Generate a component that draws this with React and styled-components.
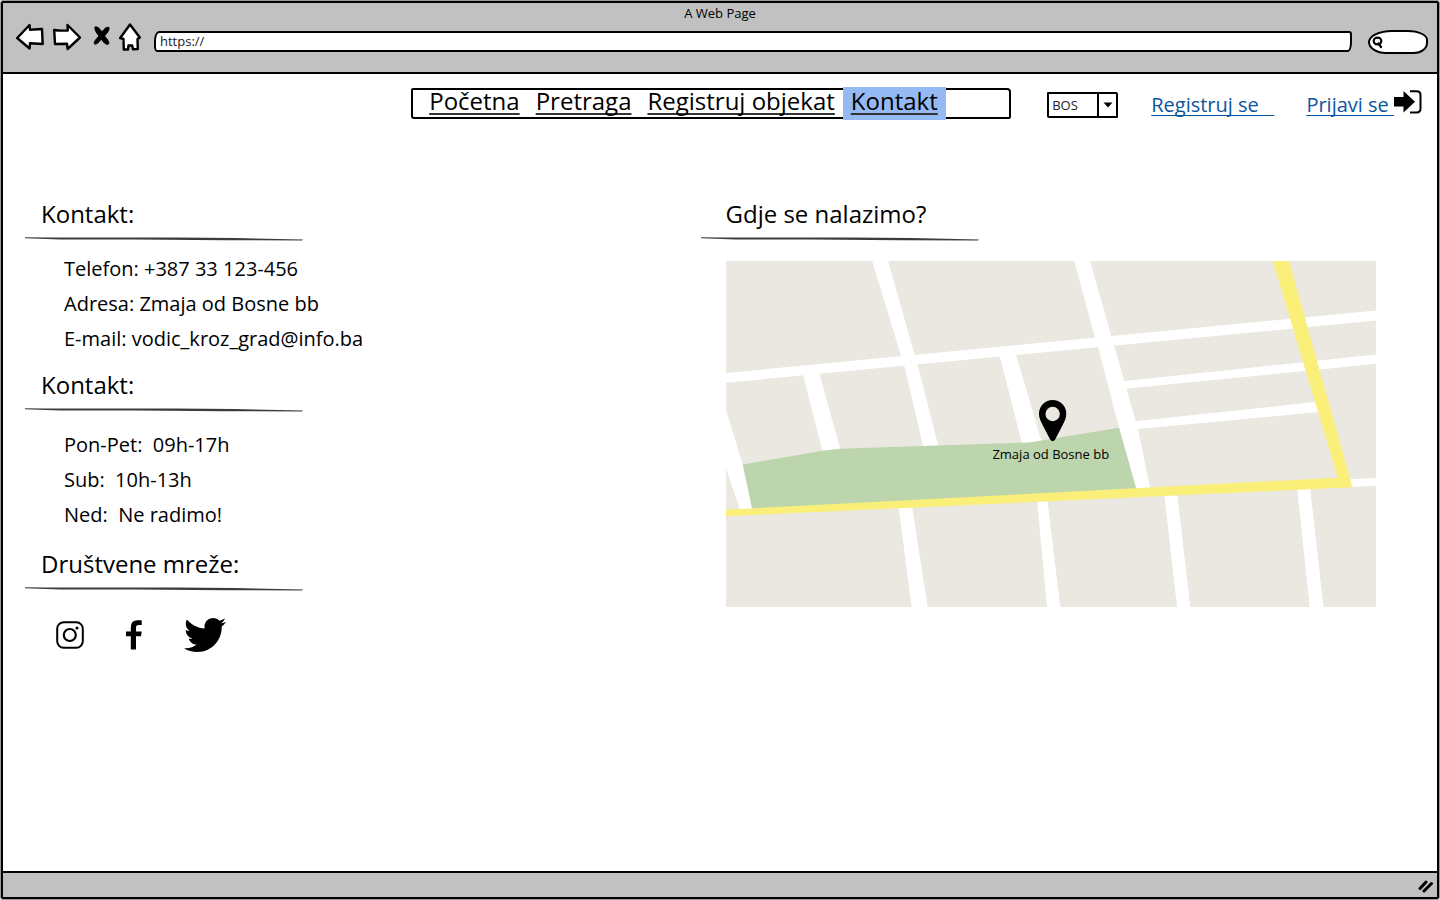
import React from 'react';
import styled, { createGlobalStyle } from 'styled-components';
import { FaTwitter } from 'react-icons/fa';

const INK = '#000';
const CHROME = '#c1c1c1';
const LINK = '#0b559f';

const GlobalStyle = createGlobalStyle`
  *, *::before, *::after { box-sizing: border-box; }
  body {
    margin: 0;
    background: #fff;
    color: ${INK};
    font-family: "Open Sans", "Noto Sans", sans-serif;
    font-size: 20px;
  }
  svg { display: block; }
`;

/* ---------- browser window ---------- */

const Page = styled.div`
  min-height: 100vh;
  padding: 1px;
  display: flex;
`;

const BrowserWindow = styled.div`
  flex: 1;
  display: flex;
  flex-direction: column;
  border: 2px solid ${INK};
  border-radius: 2px;
  box-shadow: 0 0 0 1px #999;
`;

const Chrome = styled.header`
  background: ${CHROME};
  border-bottom: 2px solid ${INK};
  padding-bottom: 12px;
`;

const WindowTitle = styled.div`
  font-size: 13px;
  line-height: 20px;
  text-align: center;
`;

const Toolbar = styled.div`
  display: flex;
  align-items: center;
  height: 37px;
  padding: 0 9px 0 13px;
`;

const ToolButtons = styled.div`
  display: flex;
  gap: 9px;
  padding-bottom: 9px;
  margin-right: 13px;
`;

const ToolButton = styled.button`
  border: 0;
  padding: 0;
  background: none;
  cursor: pointer;
`;

const AddressBar = styled.input`
  flex: 1;
  min-width: 0;
  height: 21px;
  margin-right: 16px;
  padding: 0 4px 2px;
  border: 2px solid ${INK};
  border-radius: 5px 3px 4px 3px / 10px 3px 10px 6px;
  background: #fff;
  color: #222;
  font: 13px/15px "Open Sans", sans-serif;
`;

const SearchField = styled.label`
  display: flex;
  align-items: center;
  width: 60px;
  height: 24px;
  padding-left: 2px;
  border: 2px solid ${INK};
  border-radius: 24px 20px 14px 18px / 12px 10px 11px 12px;
  background: #fff;
`;

const SearchInput = styled.input`
  flex: 1;
  min-width: 0;
  border: 0;
  padding: 0;
  outline: 0;
  background: none;
  font: 12px "Open Sans", sans-serif;
`;

const StatusBar = styled.footer`
  display: flex;
  justify-content: flex-end;
  align-items: center;
  height: 26px;
  padding: 2px 3px 0 0;
  border-top: 2px solid ${INK};
  background: ${CHROME};
`;

/* ---------- site header ---------- */

const SiteHeader = styled.div`
  display: flex;
  justify-content: flex-end;
  align-items: center;
  padding: 14px 15px 0;
`;

const Nav = styled.nav`
  display: flex;
  width: 600px;
  height: 31px;
  padding-left: 8px;
  border: 2px solid ${INK};
  border-radius: 2px 4px 2px 3px;
`;

const NavLink = styled.a`
  margin: -3px 0;
  padding: 4px 8px 8px;
  background: ${({ $active }) => ($active ? '#95b9f2' : 'none')};
  color: ${INK};
  font-size: 24px;
  line-height: 20px;
  white-space: nowrap;
  text-decoration: underline 2px #333;
  text-decoration-skip-ink: none;
  text-underline-offset: 3px;
`;

const LanguageField = styled.div`
  display: grid;
  width: 71px;
  height: 26px;
  margin: 3px 33px 0 36px;
  border: 2px solid ${INK};
  border-radius: 1px 2px 1px 2px;
`;

const LanguageSelect = styled.select`
  grid-area: 1 / 1;
  appearance: none;
  width: 100%;
  border: 0;
  padding: 0 22px 0 3px;
  background: none;
  color: #222;
  font: 13px/20px "Open Sans", sans-serif;
`;

const SelectArrow = styled.span`
  grid-area: 1 / 1;
  justify-self: end;
  display: flex;
  align-items: center;
  justify-content: center;
  width: 19px;
  border-left: 2px solid ${INK};
  pointer-events: none;
`;

const AccountLink = styled.a`
  display: flex;
  align-items: center;
  margin-left: ${({ $gap }) => $gap || 0}px;
  color: ${LINK};
  line-height: 26px;
  white-space: nowrap;
  text-decoration: none;
`;

const LinkText = styled.span`
  padding-top: 2px;
  text-decoration: underline 1px;
  text-decoration-skip-ink: none;
  text-underline-offset: 3px;
`;

const LoginIcon = styled.svg`
  margin-bottom: 4px;
`;

/* ---------- content ---------- */

const Content = styled.main`
  flex: 1;
  display: grid;
  grid-template-columns: 1fr 1fr;
  align-items: start;
  padding: 77px 61px 24px 22px;
`;

const Section = styled.section`
  margin-bottom: ${({ $after }) => $after || 0}px;
`;

const Heading = styled.h2`
  margin: 0;
  padding: 0 0 5px ${({ $indent }) => $indent || 16}px;
  font-size: 24px;
  font-weight: 400;
  line-height: 36px;
`;

const InfoList = styled.ul`
  margin: ${({ $before }) => $before}px 0 0;
  padding: 0 0 0 39px;
  list-style: none;
  line-height: 35px;
  white-space: pre-wrap;
`;

const SocialLinks = styled.div`
  display: flex;
  align-items: center;
  gap: 42px;
  margin-top: 23px;
  padding-left: 31px;
`;

const SocialLink = styled.a`
  color: ${INK};
`;

const MapFigure = styled.figure`
  position: relative;
  margin: 20px 0 0 25px;
`;

const MapPin = styled.figcaption`
  position: absolute;
  left: 50%;
  top: 40%;
  display: flex;
  flex-direction: column;
  align-items: center;
  gap: 3px;
  transform: translateX(-50%);
  font-size: 13px;
  line-height: 18px;
  white-space: nowrap;
`;

const Marker = styled.svg`
  margin-left: 4px;
`;

const SketchIcon = ({ width, height = 28, d, solid }) => (
  <svg width={width} height={height} viewBox={`0 0 ${width} ${height}`} aria-hidden="true">
    <path d={d} fill={solid ? INK : '#fff'} stroke={INK} strokeWidth={solid ? 1 : 2.4} strokeLinejoin="round" />
  </svg>
);

const HeadingRule = () => (
  <svg width="278" height="4" viewBox="0 0 278 4" aria-hidden="true">
    <path d="M0 .2 20 .5 150 .4 210 1 278 2.4 277 3.6 200 3.2 110 2.6 35 2.6 0 1.2Z" fill="#3c3c3c" />
  </svg>
);

const tools = [
  { label: 'Back', width: 28, d: 'M1.200 15 13.500 2 14 6.800 26 6 26.700 21 14 20.200 13.600 25.500Z' },
  { label: 'Forward', width: 28, d: 'M1.200 7Q6 8 14.800 7.500L14.500 2 27 14.500 14.600 26 14 20.800 2 21Z' },
  {
    label: 'Stop',
    width: 20,
    solid: true,
    d: 'M5 4Q8 3 12 9Q16 3 19 4.500Q20 7 14.500 13Q20 19 18.500 21Q15 22.500 11.500 16Q7 22 4.500 21Q3 19 9 13Q4 7 5 4Z',
  },
  {
    label: 'Home',
    width: 22,
    d: 'M11 1.500 20.800 14.500 18.500 16 18.800 26 14 26.200 13.200 22.500 9.500 22.500 9 26.500 4.800 26.500 4.500 16 1.200 15Z',
  },
];

const navItems = ['Početna', 'Pretraga', 'Registruj objekat', 'Kontakt'];
const contactLines = ['Telefon: +387 33 123-456', 'Adresa: Zmaja od Bosne bb', 'E-mail: vodic_kroz_grad@info.ba'];
const hours = ['Pon-Pet:  09h-17h', 'Sub:  10h-13h', 'Ned:  Ne radimo!'];

const roads = [
  '0,112 650,49.500 650,59.500 0,121.700',
  '146,0 162,0 188.500,94 191,102 212.500,186 197.200,186 178.500,106 175,95',
  '77,114 93,112 114.300,188 96.500,190',
  '273.300,94 289.300,92 315.300,180 295.700,182',
  '348,0 363.700,0 384.700,73.700 398,120 411.700,168 424,228 410.300,228 392.700,166.700 371.700,85.300 368.300,75',
  '396,120.200 650,93.300 650,102.700 396,128',
  '406,160.500 588.300,141 605.700,149.700 591.700,151 406,168.400',
  '0,149 16.700,203.300 26.300,248 14,248 0,207.300',
  '620,218.200 650,216.700 650,224.500 620,226',
  '172.500,246 186,246 201.500,346 185.500,346',
  '311,240 321.300,240 334,346 320.700,346',
  '438,234 451,234 464,346 450.700,346',
  '570.700,227 583.700,227 597,346 583.300,346',
];

const CityMap = () => (
  <svg width="100%" viewBox="0 0 650 346" role="img" aria-label="Mapa">
    <rect width="650" height="346" fill="#ebe8e1" />
    {roads.map((points) => (
      <polygon key={points} points={points} fill="#fff" />
    ))}
    <polygon points="16.700,203.300 96.300,189.700 114,187.500 303,181.300 392.700,166.700 410.300,229 26.300,248" fill="#bcd5ac" />
    <polygon points="546.300,0 562.500,0 626,226 0,255 0,248.500 611.300,216.500" fill="#faef78" />
  </svg>
);

export default function App() {
  return (
    <>
      <GlobalStyle />
      <Page>
        <BrowserWindow>
          <Chrome>
            <WindowTitle>A Web Page</WindowTitle>
            <Toolbar>
              <ToolButtons>
                {tools.map(({ label, ...icon }) => (
                  <ToolButton key={label} type="button" aria-label={label}>
                    <SketchIcon {...icon} />
                  </ToolButton>
                ))}
              </ToolButtons>
              <AddressBar aria-label="Address" defaultValue="https://" />
              <SearchField>
                <svg width="12" height="14" viewBox="0 0 12 14" fill="none" stroke={INK} strokeWidth="2.200" strokeLinecap="round" aria-hidden="true">
                  <ellipse cx="5.500" cy="6" rx="3.800" ry="3.300" />
                  <path d="M6.500 8.500 9 12" />
                </svg>
                <SearchInput type="search" aria-label="Search" />
              </SearchField>
            </Toolbar>
          </Chrome>

          <SiteHeader>
            <Nav>
              {navItems.map((item) => (
                <NavLink key={item} href="#" $active={item === 'Kontakt'}>
                  {item}
                </NavLink>
              ))}
            </Nav>
            <LanguageField>
              <LanguageSelect aria-label="Jezik" defaultValue="BOS">
                <option>BOS</option>
              </LanguageSelect>
              <SelectArrow>
                <svg width="10" height="6" viewBox="0 0 10 6" aria-hidden="true">
                  <path d="M.5 .5H9.500L5 5.500Z" fill={INK} />
                </svg>
              </SelectArrow>
            </LanguageField>
            <AccountLink href="#">
              <LinkText>{'Registruj se\u00a0\u00a0\u00a0'}</LinkText>
            </AccountLink>
            <AccountLink href="#" $gap={32}>
              <LinkText>{'Prijavi se\u00a0'}</LinkText>
              <LoginIcon width="28" height="24" viewBox="0 0 28 24" aria-hidden="true">
                <path d="M0 7H9.500V1L21 11.700 9.500 22.500V16.500H0Z" fill={INK} />
                <path d="M16 1.200H22.500Q26.500 1.200 26.500 5V18.500Q26.500 22.500 22.500 22.500H16" fill="none" stroke={INK} strokeWidth="2" />
              </LoginIcon>
            </AccountLink>
          </SiteHeader>

          <Content>
            <div>
              <Section $after={11}>
                <Heading>Kontakt:</Heading>
                <HeadingRule />
                <InfoList $before={10}>
                  {contactLines.map((line) => (
                    <li key={line}>{line}</li>
                  ))}
                </InfoList>
              </Section>
              <Section $after={14}>
                <Heading>Kontakt:</Heading>
                <HeadingRule />
                <InfoList $before={15}>
                  {hours.map((line) => (
                    <li key={line}>{line}</li>
                  ))}
                </InfoList>
              </Section>
              <Section>
                <Heading>Društvene mreže:</Heading>
                <HeadingRule />
                <SocialLinks>
                  <SocialLink href="#" aria-label="Instagram">
                    <svg width="28" height="28" viewBox="0 0 28 28" fill="none" stroke={INK} strokeWidth="2" aria-hidden="true">
                      <rect x="1.200" y="1.200" width="25.600" height="25.600" rx="6.500" />
                      <circle cx="13.800" cy="14" r="6" strokeWidth="2.200" />
                      <circle cx="21" cy="7" r="1.600" fill={INK} stroke="none" />
                    </svg>
                  </SocialLink>
                  <SocialLink href="#" aria-label="Facebook">
                    <svg width="16" height="30" viewBox="0 0 16 30" aria-hidden="true">
                      <path d="M4.800 29.500V16.200H0V11.500H4.800V7.500Q4.800 .3 11.500 .3H15.700V5H12.500Q10 5 10 7.600V11.500H15.700L15 16.200H10V29.500Z" fill={INK} />
                    </svg>
                  </SocialLink>
                  <SocialLink href="#" aria-label="Twitter">
                    <FaTwitter size={42} />
                  </SocialLink>
                </SocialLinks>
              </Section>
            </div>
            <Section>
              <Heading $indent={25}>Gdje se nalazimo?</Heading>
              <HeadingRule />
              <MapFigure>
                <CityMap />
                <MapPin>
                  <Marker width="28" height="42" viewBox="0 0 28 42" aria-hidden="true">
                    <path
                      d="M14 0A13.700 13.700 0 0 0 .3 13.700C.3 18 2.500 22 5 27L11.500 39.500Q14 43 16.500 39.500L23 27C25.500 22 27.700 18 27.700 13.700A13.700 13.700 0 0 0 14 0ZM14 6.800A7.200 7.200 0 1 1 14 21.200A7.200 7.200 0 0 1 14 6.800Z"
                      fill={INK}
                      fillRule="evenodd"
                    />
                  </Marker>
                  Zmaja od Bosne bb
                </MapPin>
              </MapFigure>
            </Section>
          </Content>

          <StatusBar>
            <svg width="16" height="14" viewBox="0 0 16 14" stroke={INK} strokeWidth="3" strokeLinecap="round" aria-hidden="true">
              <path d="M2 9.500 8 3M6 12 13.500 4.500" fill="none" />
            </svg>
          </StatusBar>
        </BrowserWindow>
      </Page>
    </>
  );
}
